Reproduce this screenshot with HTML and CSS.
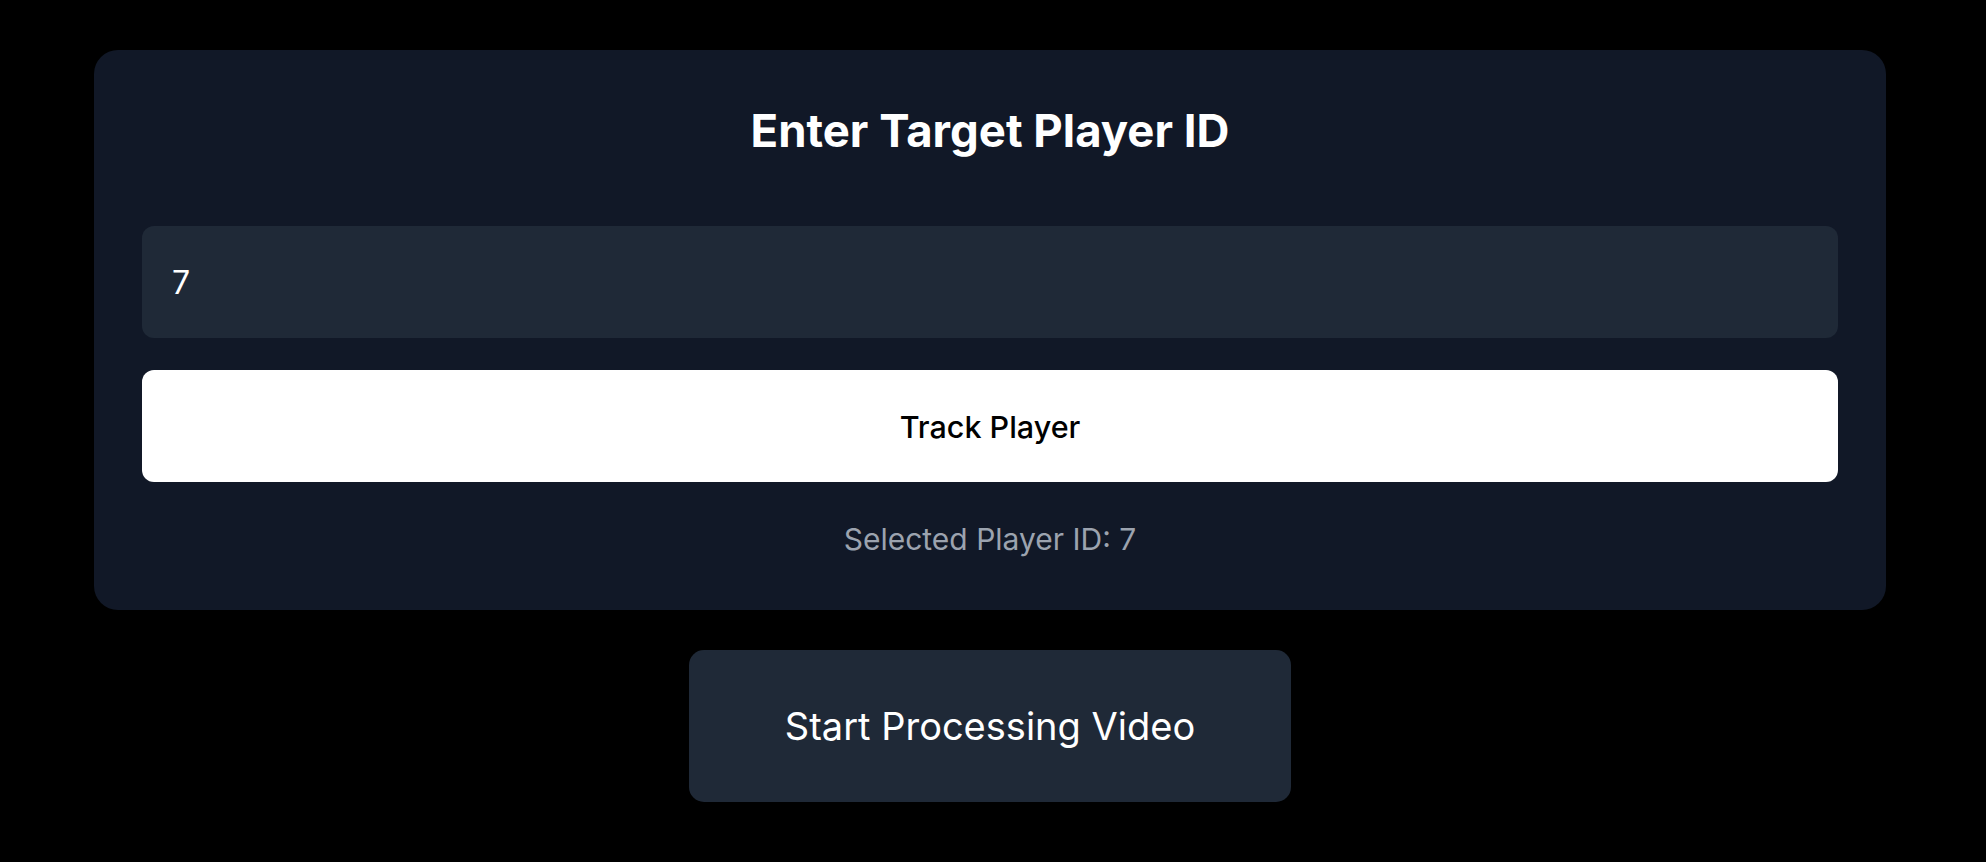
FILE: index.html
```html
<!DOCTYPE html>
<html lang="en">
<head>
<meta charset="utf-8">
<title>Target Player</title>
<link rel="stylesheet" href="styles.css">
</head>
<body>
<main class="page">
  <section class="card">
    <h1 class="title">Enter Target Player ID</h1>
    <input class="id-input" type="text" value="7">
    <button class="track-btn" type="button">Track Player</button>
    <p class="selected">Selected Player ID: 7</p>
  </section>
  <button class="start-btn" type="button">Start Processing Video</button>
</main>
</body>
</html>
```

FILE: styles.css
```css
* { box-sizing: border-box; }
html, body {
  margin: 0;
  background: #000;
  font-family: Inter, "Noto Sans", "Liberation Sans", sans-serif;
}
.page {
  display: flex;
  flex-direction: column;
  align-items: center;
  gap: 40px;
  padding: 50px 6px 0 0;
}
.card {
  width: 1792px;
  background: #111827;
  border-radius: 24px;
  padding: 56px 48px 51px;
  display: flex;
  flex-direction: column;
}
.title {
  margin: 0 0 70px;
  text-align: center;
  color: #fff;
  font-size: 45.5px;
  line-height: 50px;
  font-weight: 700;
}
.id-input {
  height: 112px;
  width: 100%;
  border: none;
  outline: none;
  border-radius: 12px;
  background: #1f2937;
  color: #fff;
  font-family: inherit;
  font-size: 32px;
  padding: 0 30px;
}
.track-btn {
  margin-top: 32px;
  height: 112px;
  width: 100%;
  border: none;
  border-radius: 12px;
  background: #fff;
  color: #000;
  font-family: inherit;
  font-size: 30.5px;
  font-weight: 500;
}
.selected {
  margin: 37px 0 0;
  text-align: center;
  color: #9ca3af;
  font-size: 30px;
  line-height: 40px;
}
.start-btn {
  height: 152px;
  padding: 0 96px;
  border: none;
  border-radius: 15px;
  background: #1f2937;
  color: #fff;
  font-family: inherit;
  font-size: 38px;
}
```
